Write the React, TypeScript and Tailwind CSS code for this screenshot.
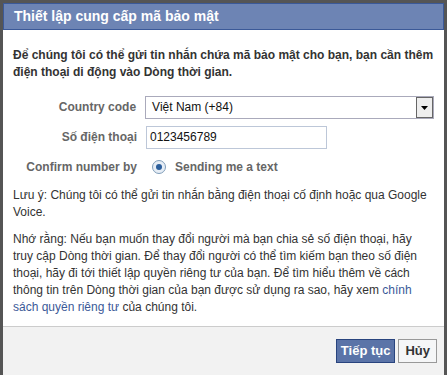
import React from "react";

export default function App() {
  return (
    <div className="w-[447px] h-[375px] bg-[#555] pt-[3px] px-[3px] overflow-hidden" style={{ fontFamily: '"Liberation Sans", Arial, sans-serif' }}>
      <div className="flex flex-col h-full bg-white">
        <div className="h-[27px] bg-[#6d84b4] border border-[#3b5998] flex items-center pl-[10px]">
          <span className="text-white font-bold text-[14px]">Thiết lập cung cấp mã bảo mật</span>
        </div>
        <div className="flex-1 px-[10px] pt-[17px] text-[12px] leading-[17px] text-[#333]">
          <p className="font-bold">
            Để chúng tôi có thể gửi tin nhắn chứa mã bảo mật cho bạn, bạn cần thêm điện thoại di động vào Dòng thời gian.
          </p>
          <div className="mt-[15px] flex flex-col gap-[7px]">
            <div className="flex items-center">
              <div className="w-[133px] text-right pr-[9px] font-bold text-[#666]">Country code</div>
              <div className="w-[291px] h-[23px] border border-[#aab] bg-white flex items-center justify-between pl-[6px] text-[#111]">
                <span>Việt Nam (+84)</span>
                <div className="w-[17px] h-[21px] border border-[#666] bg-[#eee] flex items-center justify-center">
                  <svg width="7" height="4" viewBox="0 0 7 4"><path d="M0 0h7L3.5 4z" fill="#000" /></svg>
                </div>
              </div>
            </div>
            <div className="flex items-center">
              <div className="w-[133px] text-right pr-[9px] font-bold text-[#666]">Số điện thoại</div>
              <div className="w-[181px] h-[23px] border border-[#bdc7d8] bg-white flex items-center pl-[3px] text-[#111]">0123456789</div>
            </div>
            <div className="flex items-center h-[22px]">
              <div className="w-[133px] text-right pr-[9px] font-bold text-[#666]">Confirm number by</div>
              <div className="flex items-center">
                <div className="ml-[6px] w-[14px] h-[14px] rounded-full border border-[#7f9db9] bg-[#e6edf5] flex items-center justify-center">
                  <div className="w-[6px] h-[6px] rounded-full bg-[#2a5e9c]" />
                </div>
                <span className="ml-[9px] font-bold text-[#666]">Sending me a text</span>
              </div>
            </div>
          </div>
          <p className="mt-[9px]">
            Lưu ý: Chúng tôi có thể gửi tin nhắn bằng điện thoại cố định hoặc qua Google Voice.
          </p>
          <p className="mt-[10px]">
            Nhớ rằng: Nếu bạn muốn thay đổi người mà bạn chia sẻ số điện thoại, hãy truy cập Dòng thời gian. Để thay đổi người có thể tìm kiếm bạn theo số điện thoại, hãy đi tới thiết lập quyền riêng tư của bạn. Để tìm hiểu thêm về cách thông tin trên Dòng thời gian của bạn được sử dụng ra sao, hãy xem <span className="text-[#3b5998]">chính sách quyền riêng tư</span> của chúng tôi.
          </p>
        </div>
        <div className="h-[49px] bg-[#f2f2f2] border-t border-[#ccc] flex items-start justify-end gap-[3px] pt-[12px] pr-[7px]">
          <button className="h-[24px] px-[4px] bg-[#5b74a8] border border-[#29447e] text-white font-bold text-[13px]">Tiếp tục</button>
          <button className="h-[24px] px-[6px] bg-[#f5f6f7] border border-[#999] text-[#333] font-bold text-[13px]">Hủy</button>
        </div>
      </div>
    </div>
  );
}
